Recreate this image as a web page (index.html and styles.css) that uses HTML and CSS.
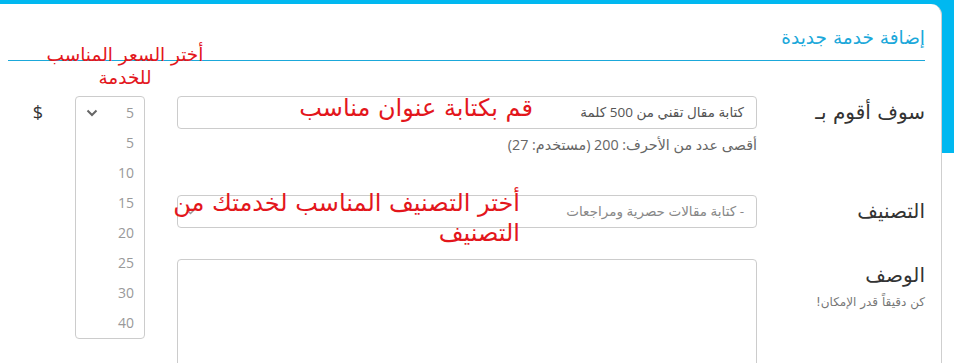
FILE: index.html
```html
<!DOCTYPE html>
<html lang="ar" dir="rtl">
<head>
  <meta charset="UTF-8">
  <title>إضافة خدمة جديدة</title>
  <link rel="stylesheet" href="styles.css">
</head>
<body>

  <div class="page">
    <div class="card">
      <h2 class="card-title">إضافة خدمة جديدة</h2>

      <form class="service-form">
        <!-- العنوان -->
        <label class="field-label row-1">سوف أقوم بـ</label>
        <div class="field row-1">
          <div class="input">كتابة مقال تقني من 500 كلمة</div>
          <p class="help">أقصى عدد من الأحرف: 200 (مستخدم: 27)</p>
        </div>

        <!-- السعر -->
        <div class="price-select">
          <div class="price-current">
            <span>5</span>
            <svg class="chevron" width="12" height="8" viewBox="0 0 12 8"><polyline points="1.5,1.5 6,6 10.5,1.5" fill="none" stroke="#666" stroke-width="2"/></svg>
          </div>
          <ul class="price-options">
            <li>5</li>
            <li>10</li>
            <li>15</li>
            <li>20</li>
            <li>25</li>
            <li>30</li>
            <li>40</li>
          </ul>
        </div>
        <div class="currency">$</div>

        <!-- التصنيف -->
        <label class="field-label row-2">التصنيف</label>
        <div class="field row-2">
          <div class="input select">
            <span>- كتابة مقالات حصرية ومراجعات</span>
            <svg class="chevron small" width="9" height="6" viewBox="0 0 9 6"><polyline points="1,1 4.5,4.5 8,1" fill="none" stroke="#999" stroke-width="1.5"/></svg>
          </div>
        </div>

        <!-- الوصف -->
        <div class="field-label row-3">
          الوصف
          <small>كن دقيقاً قدر الإمكان!</small>
        </div>
        <div class="field row-3">
          <div class="textarea"></div>
        </div>
      </form>
    </div>

    <!-- ملاحظات الشرح -->
    <span class="tip tip-price">أختر السعر المناسب للخدمة</span>
    <span class="tip tip-title">قم بكتابة عنوان مناسب</span>
    <span class="tip tip-category">أختر التصنيف المناسب لخدمتك من التصنيف</span>
  </div>

</body>
</html>
```

FILE: styles.css
```css
* {
  margin: 0;
  padding: 0;
  box-sizing: border-box;
}

html, body {
  background-color: #fff;
  font-family: 'Open Sans', 'DejaVu Sans', sans-serif;
  color: #333;
  overflow: hidden;
}

.page {
  position: relative;
  height: 363px;
  padding: 4px 12px 0 0;
  background: linear-gradient(#00b8f0 153px, #fff 153px);
}

.card {
  background: #fff;
  height: 100%;
  border-right: 1px solid #cfcfcf;
  border-top-right-radius: 11px;
  padding: 21px 16px 0 0;
}

.card-title {
  font-family: 'DejaVu Sans', sans-serif;
  font-weight: normal;
  font-size: 18.5px;
  line-height: 26px;
  color: #1ba8da;
  padding-bottom: 9px;
  border-bottom: 1px solid #1ba8da;
  margin: 0 0 35px 8px;
}

.service-form {
  display: grid;
  grid-template-columns: 150px 18px 580px 32px 70px 32px auto;
  row-gap: 31px;
  align-items: start;
}

.row-1 { grid-row: 1; }
.row-2 { grid-row: 2; }
.row-3 { grid-row: 3; }

.field-label {
  grid-column: 1;
  font-family: 'DejaVu Sans', sans-serif;
  font-size: 20px;
  line-height: 33px;
  color: #333;
}

.field-label small {
  display: block;
  font-size: 12px;
  line-height: 16px;
  margin-top: 2px;
  color: #777;
}

.field {
  grid-column: 3;
}

.input {
  height: 33px;
  border: 1px solid #ccc;
  border-radius: 4px;
  padding: 0 12px;
  font-size: 13.5px;
  line-height: 31px;
  color: #555;
}

.select {
  display: flex;
  justify-content: space-between;
  align-items: center;
  color: #888;
  font-size: 13.5px;
}

.chevron.small {
  margin-left: -4px;
}

.help {
  font-size: 14.3px;
  line-height: 20px;
  margin: 6px 0 9px;
  color: #666;
}

.textarea {
  height: 130px;
  border: 1px solid #ccc;
  border-radius: 4px;
}

.price-select {
  grid-column: 5;
  grid-row: 1 / 4;
  border: 1px solid #ccc;
  border-radius: 4px;
  font-size: 14px;
  color: #999;
}

.price-current {
  height: 31px;
  display: flex;
  justify-content: space-between;
  align-items: center;
  padding: 0 10px;
}

.price-options {
  list-style: none;
}

.price-options li {
  line-height: 30px;
  padding-right: 10px;
}

.currency {
  grid-column: 7;
  grid-row: 1;
  font-size: 18px;
  line-height: 33px;
  color: #333;
}

.tip {
  position: absolute;
  font-family: 'DejaVu Sans', sans-serif;
  color: #e3161c;
  white-space: normal;
}

.tip-price {
  left: 30px;
  top: 43px;
  width: 190px;
  font-size: 18.5px;
  line-height: 23px;
  text-align: center;
}

.tip-title {
  right: 421px;
  top: 93px;
  font-size: 24px;
  line-height: 30px;
}

.tip-category {
  right: 434px;
  top: 188px;
  width: 352px;
  font-size: 24px;
  line-height: 30px;
  text-align: right;
}
```
